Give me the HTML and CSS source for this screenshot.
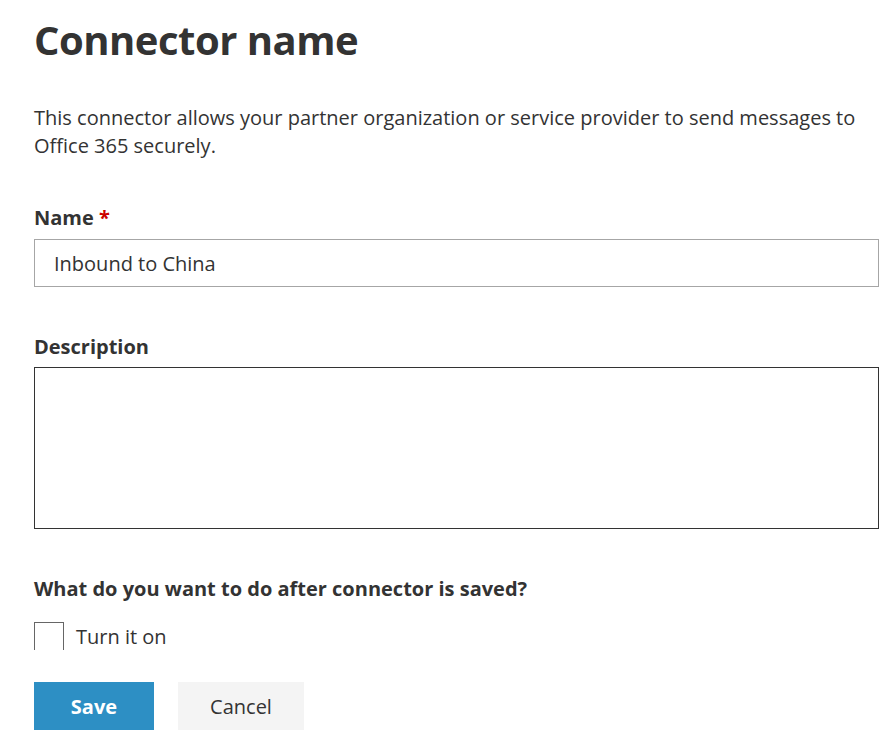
FILE: index.html
```html
<!DOCTYPE html>
<html>
<head>
<meta charset="utf-8">
<link rel="stylesheet" href="styles.css">
</head>
<body>
<main class="page">
  <h1 class="title">Connector name</h1>
  <p class="intro">This connector allows your partner organization or service provider to send messages to Office 365 securely.</p>
  <div class="field">
    <label class="label">Name <span class="req">*</span></label>
    <div class="input">Inbound to China</div>
  </div>
  <div class="field field-desc">
    <label class="label">Description</label>
    <div class="textarea"></div>
  </div>
  <div class="after">
    <div class="label">What do you want to do after connector is saved?</div>
    <div class="check-clip">
      <div class="check-row">
        <span class="box"></span>
        <span class="check-text">Turn it on</span>
      </div>
    </div>
  </div>
  <div class="actions">
    <button class="btn btn-primary">Save</button>
    <button class="btn btn-secondary">Cancel</button>
  </div>
</main>
</body>
</html>
```
FILE: styles.css
```css
html, body {
  margin: 0;
  padding: 0;
  background: #fff;
}
body {
  font-family: "Open Sans", "Noto Sans", sans-serif;
  color: #333;
}
.page {
  width: 845px;
  padding: 0 0 0 34px;
  display: flex;
  flex-direction: column;
}
.title {
  margin: 12px 0 0 0;
  font-size: 40px;
  font-weight: 700;
  line-height: 56px;
  letter-spacing: -0.5px;
}
.intro {
  margin: 36px 0 0 0;
  font-size: 20px;
  line-height: 28px;
}
.field {
  display: flex;
  flex-direction: column;
  margin-top: 44px;
}
.label {
  font-size: 20px;
  font-weight: 700;
  line-height: 28px;
}
.req {
  color: #c00;
}
.input {
  margin-top: 7px;
  border: 1px solid #a6a6a6;
  box-sizing: border-box;
  height: 48px;
  padding: 0 19px;
  font-size: 20px;
  line-height: 47px;
}
.field-desc {
  margin-top: 46px;
}
.textarea {
  margin-top: 6px;
  height: 162px;
  box-sizing: border-box;
  border: 1px solid #333;
}
.after {
  margin-top: 46px;
  display: flex;
  flex-direction: column;
}
.check-clip {
  margin-top: 19px;
  height: 28px;
  overflow: hidden;
}
.check-row {
  display: flex;
  align-items: flex-start;
  gap: 12px;
}
.box {
  width: 30px;
  height: 30px;
  box-sizing: border-box;
  border: 1px solid #666;
  flex: none;
}
.check-text {
  font-size: 20px;
  line-height: 30px;
}
.actions {
  margin-top: 32px;
  display: flex;
  gap: 24px;
}
.btn {
  font-family: "Open Sans", "Noto Sans", sans-serif;
  font-size: 20px;
  height: 48px;
  border: none;
  padding: 0;
}
.btn-primary {
  width: 120px;
  background: #2d8fc4;
  color: #fff;
  font-weight: 700;
}
.btn-secondary {
  width: 126px;
  background: #f4f4f4;
  color: #333;
}
```
